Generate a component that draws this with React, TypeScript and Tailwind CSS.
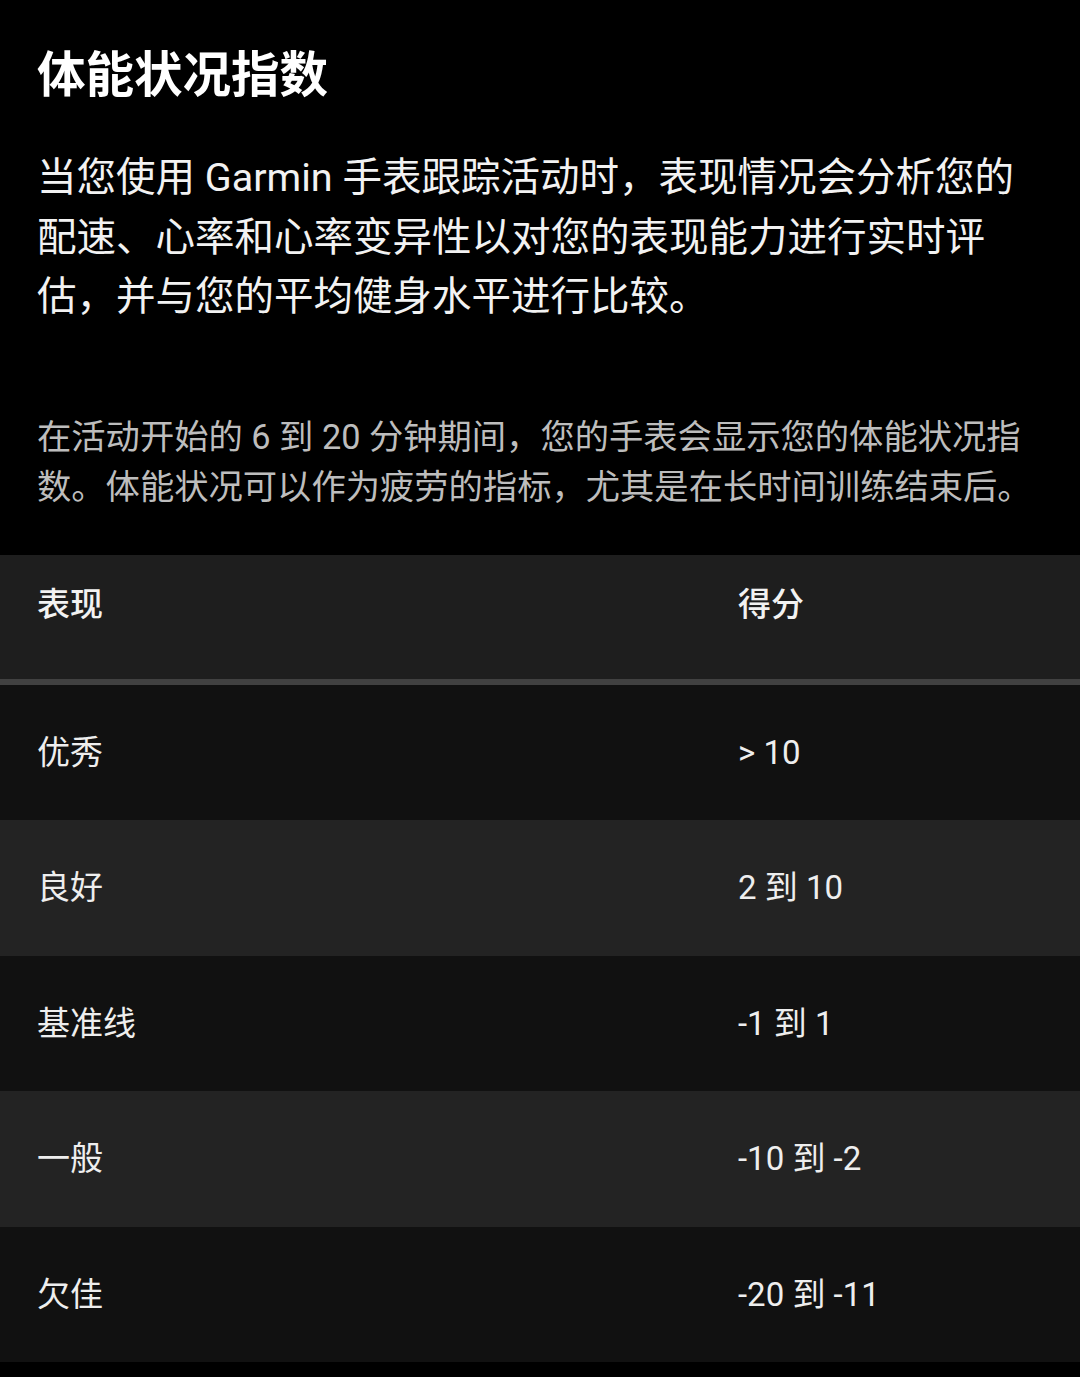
const rows = [
  { label: '优秀', score: '> 10' },
  { label: '良好', score: '2 到 10' },
  { label: '基准线', score: '-1 到 1' },
  { label: '一般', score: '-10 到 -2' },
  { label: '欠佳', score: '-20 到 -11' },
];

export default function App() {
  return (
    <div className="min-h-[1377px] bg-black text-white font-['Roboto','Noto_Sans_CJK_SC',sans-serif]">
      <div className="pl-[37px] pr-[30px] pt-[46px]">
        <h1 className="text-[48.5px] leading-[60px] font-bold">体能状况指数</h1>

        <p className="mt-[42px] text-[39.5px] leading-[59.5px] text-[#f2f2f2] whitespace-nowrap">
          当您使用 Garmin 手表跟踪活动时，表现情况会分析您的
          <br />
          配速、心率和心率变异性以对您的表现能力进行实时评
          <br />
          估，并与您的平均健身水平进行比较。
        </p>

        <p className="mt-[85px] text-[34.3px] leading-[50px] text-[#bdbdbd] whitespace-nowrap">
          在活动开始的 6 到 20 分钟期间，您的手表会显示您的体能状况指
          <br />
          数。体能状况可以作为疲劳的指标，尤其是在长时间训练结束后。
        </p>
      </div>

      <div className="mt-[43px]">
        <div className="flex items-center h-[130px] pb-[24px] bg-[#1e1e1e] border-b-[6px] border-[#414141] text-[33px] font-medium text-[#f2f2f2]">
          <div className="w-[738px] pl-[37px]">表现</div>
          <div>得分</div>
        </div>
        {rows.map((r, i) => (
          <div
            key={r.label}
            className={
              'flex items-center h-[135.5px] text-[33px] text-[#eeeeee] ' +
              (i % 2 === 0 ? 'bg-[#111111]' : 'bg-[#232323]')
            }
          >
            <div className="w-[738px] pl-[37px]">{r.label}</div>
            <div>{r.score}</div>
          </div>
        ))}
      </div>
    </div>
  );
}
